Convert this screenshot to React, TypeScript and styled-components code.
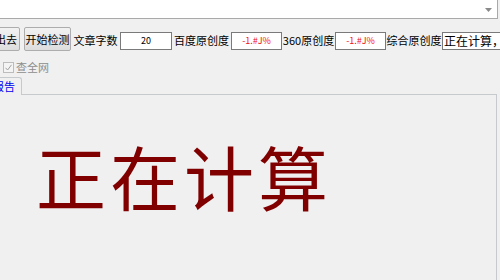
import styled, { createGlobalStyle } from "styled-components";

const Global = createGlobalStyle`
  html, body {
    margin: 0;
    padding: 0;
    background: #f0f0f0;
  }
  body {
    font-family: "Noto Sans CJK SC", "Liberation Sans", sans-serif;
    color: #000;
  }
`;

const Window = styled.div`
  width: 500px;
  height: 280px;
  overflow: hidden;
  background: #f0f0f0;
  display: flex;
  flex-direction: column;
`;

const Memo = styled.div`
  width: 497px;
  height: 18px;
  flex: none;
  background: #fff;
  border-right: 1px solid #a9a9a9;
  border-bottom: 1px solid #a9a9a9;
  display: flex;
  justify-content: flex-end;
`;

const ScrollBar = styled.div`
  width: 17px;
  display: flex;
  align-items: center;
  justify-content: center;
  padding-top: 2px;
`;

const Toolbar = styled.div`
  margin-top: 8px;
  height: 24px;
  display: flex;
  align-items: center;
  flex: none;
`;

const Button = styled.button<{ $w: number; $ml?: number; $right?: boolean }>`
  width: ${(p) => p.$w}px;
  height: 24px;
  margin-left: ${(p) => p.$ml ?? 0}px;
  flex: none;
  padding: 0 ${(p) => (p.$right ? 2 : 0)}px 0 0;
  border: 1px solid #adadad;
  border-radius: 2px;
  background: linear-gradient(#f2f2f2, #dddddd);
  font-family: "Noto Sans CJK SC", sans-serif;
  font-size: 11px;
  color: #000;
  text-align: ${(p) => (p.$right ? "right" : "center")};
  line-height: 20px;
  white-space: nowrap;
`;

const Label = styled.span<{ $w: number }>`
  width: ${(p) => p.$w}px;
  flex: none;
  text-align: center;
  font-size: 11px;
  white-space: nowrap;
  margin-top: 2px;
`;

const Field = styled.div<{ $w: number; $red?: boolean; $left?: boolean }>`
  width: ${(p) => p.$w}px;
  height: 18px;
  margin-top: 4px;
  flex: none;
  box-sizing: border-box;
  background: #fff;
  border: 1px solid #7a7a7a;
  color: ${(p) => (p.$red ? "#f01010" : "#000")};
  font-size: ${(p) => (p.$left ? 12 : 9)}px;
  line-height: 16px;
  text-align: ${(p) => (p.$left ? "left" : "center")};
  padding-left: ${(p) => (p.$left ? 1 : 0)}px;
  white-space: nowrap;
  overflow: hidden;
`;

const CheckRow = styled.label`
  margin-top: 10px;
  margin-left: 3px;
  height: 12px;
  display: flex;
  align-items: center;
  gap: 2px;
  font-size: 11px;
  color: #8d8d8d;
  flex: none;
`;

const Box = styled.span`
  width: 9px;
  height: 9px;
  border: 1px solid #bcbcbc;
  background: #f4f4f4;
  display: flex;
  align-items: center;
  justify-content: center;
`;

const TabStrip = styled.div`
  margin-top: 3px;
  height: 18px;
  display: flex;
  align-items: flex-end;
  flex: none;
`;

const Tab = styled.div`
  width: 40px;
  height: 18px;
  flex: none;
  margin-left: -18px;
  box-sizing: border-box;
  border: 1px solid #c6cacd;
  border-bottom: none;
  border-radius: 0 3px 0 0;
  background: #f0f0f0;
  color: #0000ee;
  font-size: 11px;
  line-height: 17px;
  text-align: right;
  padding-right: 6px;
  white-space: nowrap;
  position: relative;
  top: 1px;
`;

const Panel = styled.div`
  width: 497px;
  flex: 1;
  border-top: 1px solid #c6cacd;
  border-right: 1px solid #c6cacd;
  box-sizing: border-box;
  padding: 46px 0 0 36px;
`;

const Status = styled.div`
  font-family: "Noto Sans CJK SC", serif;
  font-size: 70px;
  line-height: 70px;
  letter-spacing: 4px;
  color: #800000;
  font-weight: 400;
  white-space: nowrap;
`;

export default function App() {
  return (
    <Window>
      <Global />
      <Memo>
        <ScrollBar>
          <svg width="7" height="4" viewBox="0 0 7 4">
            <path d="M0 0 L7 0 L3.5 4 Z" fill="#8a8a8a" />
          </svg>
        </ScrollBar>
      </Memo>
      <Toolbar>
        <Button $w={40} $ml={-20} $right>出去</Button>
        <Button $w={47} $ml={4}>开始检测</Button>
        <Label $w={49}>文章字数</Label>
        <Field $w={52}>20</Field>
        <Label $w={59}>百度原创度</Label>
        <Field $w={51} $red>-1.#J%</Field>
        <Label $w={53}>360原创度</Label>
        <Field $w={51} $red>-1.#J%</Field>
        <Label $w={56}>综合原创度</Label>
        <Field $w={62} $left>正在计算，请稍候</Field>
      </Toolbar>
      <CheckRow>
        <Box>
          <svg width="7" height="7" viewBox="0 0 7 7">
            <path d="M0.5 3.8 L2.6 6 L6.5 0.8" fill="none" stroke="#a0a0a0" strokeWidth="1" />
          </svg>
        </Box>
        查全网
      </CheckRow>
      <TabStrip>
        <Tab>报告</Tab>
      </TabStrip>
      <Panel>
        <Status>正在计算</Status>
      </Panel>
    </Window>
  );
}
